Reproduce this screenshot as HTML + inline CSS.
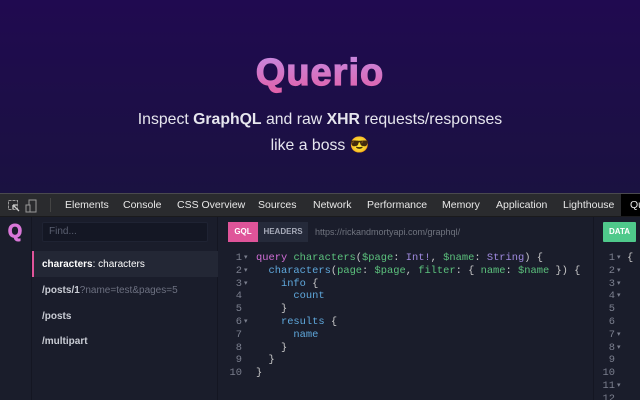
<!DOCTYPE html>
<html><head><style>
*{margin:0;padding:0;box-sizing:border-box}
html,body{width:640px;height:400px;overflow:hidden}
body{font-family:"Liberation Sans",sans-serif;background:linear-gradient(#200a50 0%,#1a1240 50%,#15162b 100%);position:relative}
.hero{position:absolute;left:0;top:0;width:640px;height:193px}
h1{position:absolute;top:52px;width:100%;text-align:center;font-size:38px;font-weight:bold;background:linear-gradient(#c48ce4,#e35ea6);-webkit-background-clip:text;color:transparent;letter-spacing:1px;-webkit-text-stroke:1.2px transparent}
.sub{position:absolute;top:107px;width:100%;text-align:center;color:#e6e6ee;font-size:15.8px;line-height:26px}
.bar{position:absolute;top:193px;left:0;width:640px;height:24px;background:#2a2b2e;border-top:1px solid #4a4a4e;border-bottom:1px solid #1a1a1c}
.bar span{position:absolute;top:5px;color:#e8e8e8;font-size:10.5px}
.main{position:absolute;top:217px;left:0;width:640px;height:190px;background:#1a1d2b}
.qcol{position:absolute;left:0;top:0;width:32px;height:190px;border-right:1px solid #141622}
.side{position:absolute;left:32px;top:0;width:186px;height:190px;border-right:1px solid #141622}
.find{position:absolute;left:10px;top:5px;width:166px;height:20px;background:#141724;border:1px solid #1f2333;border-radius:2px;color:#5a5f70;font-size:10px;padding:3px 6px}
.item{position:absolute;left:0;width:186px;height:26px;font-size:10px;color:#c9ccd4;padding:8px 10px;font-weight:bold}
.sel{background:#232735;border-left:2px solid #e0549a;color:#fff}
.right{position:absolute;left:593px;top:0;width:47px;height:190px;border-left:1px solid #141622}
.code{position:absolute;font-family:"Liberation Mono",monospace;font-size:10.4px;line-height:12.8px;white-space:pre;color:#c8c8c8}
.ln{color:#7b7f8e;text-align:right}
.k{color:#d16ed6}.g{color:#5cc27d}.p{color:#a08be0}.b{color:#5fa8dc}
</style></head><body>
<div class="hero">
<h1>Querio</h1>
<div class="sub">Inspect <b>GraphQL</b> and raw <b>XHR</b> requests/responses<br>like a boss 😎</div>
</div>
<div class="bar">
<svg style="position:absolute;left:7px;top:5px" width="30" height="14"><rect x="1.5" y="1.5" width="9" height="9" fill="none" stroke="#999" stroke-dasharray="3 1"/><path d="M6 6l6 6M6 6v4M6 6h4" stroke="#ccc" stroke-width="1.3"/><rect x="22" y="1" width="7" height="12" fill="none" stroke="#999"/><rect x="19" y="6" width="4" height="7" fill="#2a2b2e" stroke="#999"/></svg>
<div style="position:absolute;left:50px;top:4px;width:1px;height:14px;background:#444"></div>
<span style="left:65px">Elements</span><span style="left:123px">Console</span><span style="left:177px">CSS Overview</span><span style="left:258px">Sources</span><span style="left:313px">Network</span><span style="left:367px">Performance</span><span style="left:442px">Memory</span><span style="left:496px">Application</span><span style="left:563px">Lighthouse</span>
<div style="position:absolute;left:621px;top:0;width:19px;height:22px;background:#000"></div><span style="left:630px">Qu</span>
</div>
<div class="main">
<div class="qcol"><div style="position:absolute;left:8px;top:4px;font-size:18px;font-weight:bold;color:#d977d8;-webkit-text-stroke:1px #d977d8">Q</div></div>
<div class="side">
<div class="find">Find...</div>
<div class="item sel" style="top:34px;padding-left:8px">characters<span style="font-weight:normal">: characters</span></div>
<div class="item" style="top:60px">/posts/1<span style="font-weight:normal;color:#6c7080">?name=test&amp;pages=5</span></div>
<div class="item" style="top:86px">/posts</div>
<div class="item" style="top:111px">/multipart</div>
</div>
<div style="position:absolute;left:228px;top:5px;width:30px;height:20px;background:#df5499;color:#fff;font-size:8px;font-weight:bold;text-align:center;line-height:20px">GQL</div>
<div style="position:absolute;left:258px;top:5px;width:50px;height:20px;background:#252a3a;color:#a6aab8;font-size:8px;font-weight:bold;text-align:center;line-height:20px">HEADERS</div>
<div style="position:absolute;left:315px;top:10px;color:#70747f;font-size:9px">https://rickandmortyapi.com/graphql/</div>
<div class="code ln" style="left:226px;top:35px;width:16px">1
2
3
4
5
6
7
8
9
10</div>
<div class="code" style="left:244px;top:35px;color:#7b7f8e;font-size:7px;line-height:12.8px">▾
▾
▾


▾</div>
<div class="code" style="left:256px;top:35px"><span class="k">query</span> <span class="g">characters</span>(<span class="g">$page</span>: <span class="p">Int!</span>, <span class="g">$name</span>: <span class="p">String</span>) {
  <span class="b">characters</span>(<span class="g">page</span>: <span class="g">$page</span>, <span class="g">filter</span>: { <span class="g">name</span>: <span class="g">$name</span> }) {
    <span class="b">info</span> {
      <span class="b">count</span>
    }
    <span class="b">results</span> {
      <span class="b">name</span>
    }
  }
}</div>
<div class="right">
<div style="position:absolute;left:9px;top:5px;width:33px;height:20px;background:#4fc98b;color:#fff;font-size:8px;font-weight:bold;text-align:center;line-height:20px;border-radius:1px">DATA</div>
<div class="code ln" style="left:0;top:35px;width:21px">1
2
3
4
5
6
7
8
9
10
11
12</div>
<div class="code" style="left:23px;top:35px;color:#7b7f8e;font-size:7px">▾
▾
▾
▾


▾
▾


▾</div>
<div class="code" style="left:33px;top:35px">{</div>
</div>
</div>
</body></html>
